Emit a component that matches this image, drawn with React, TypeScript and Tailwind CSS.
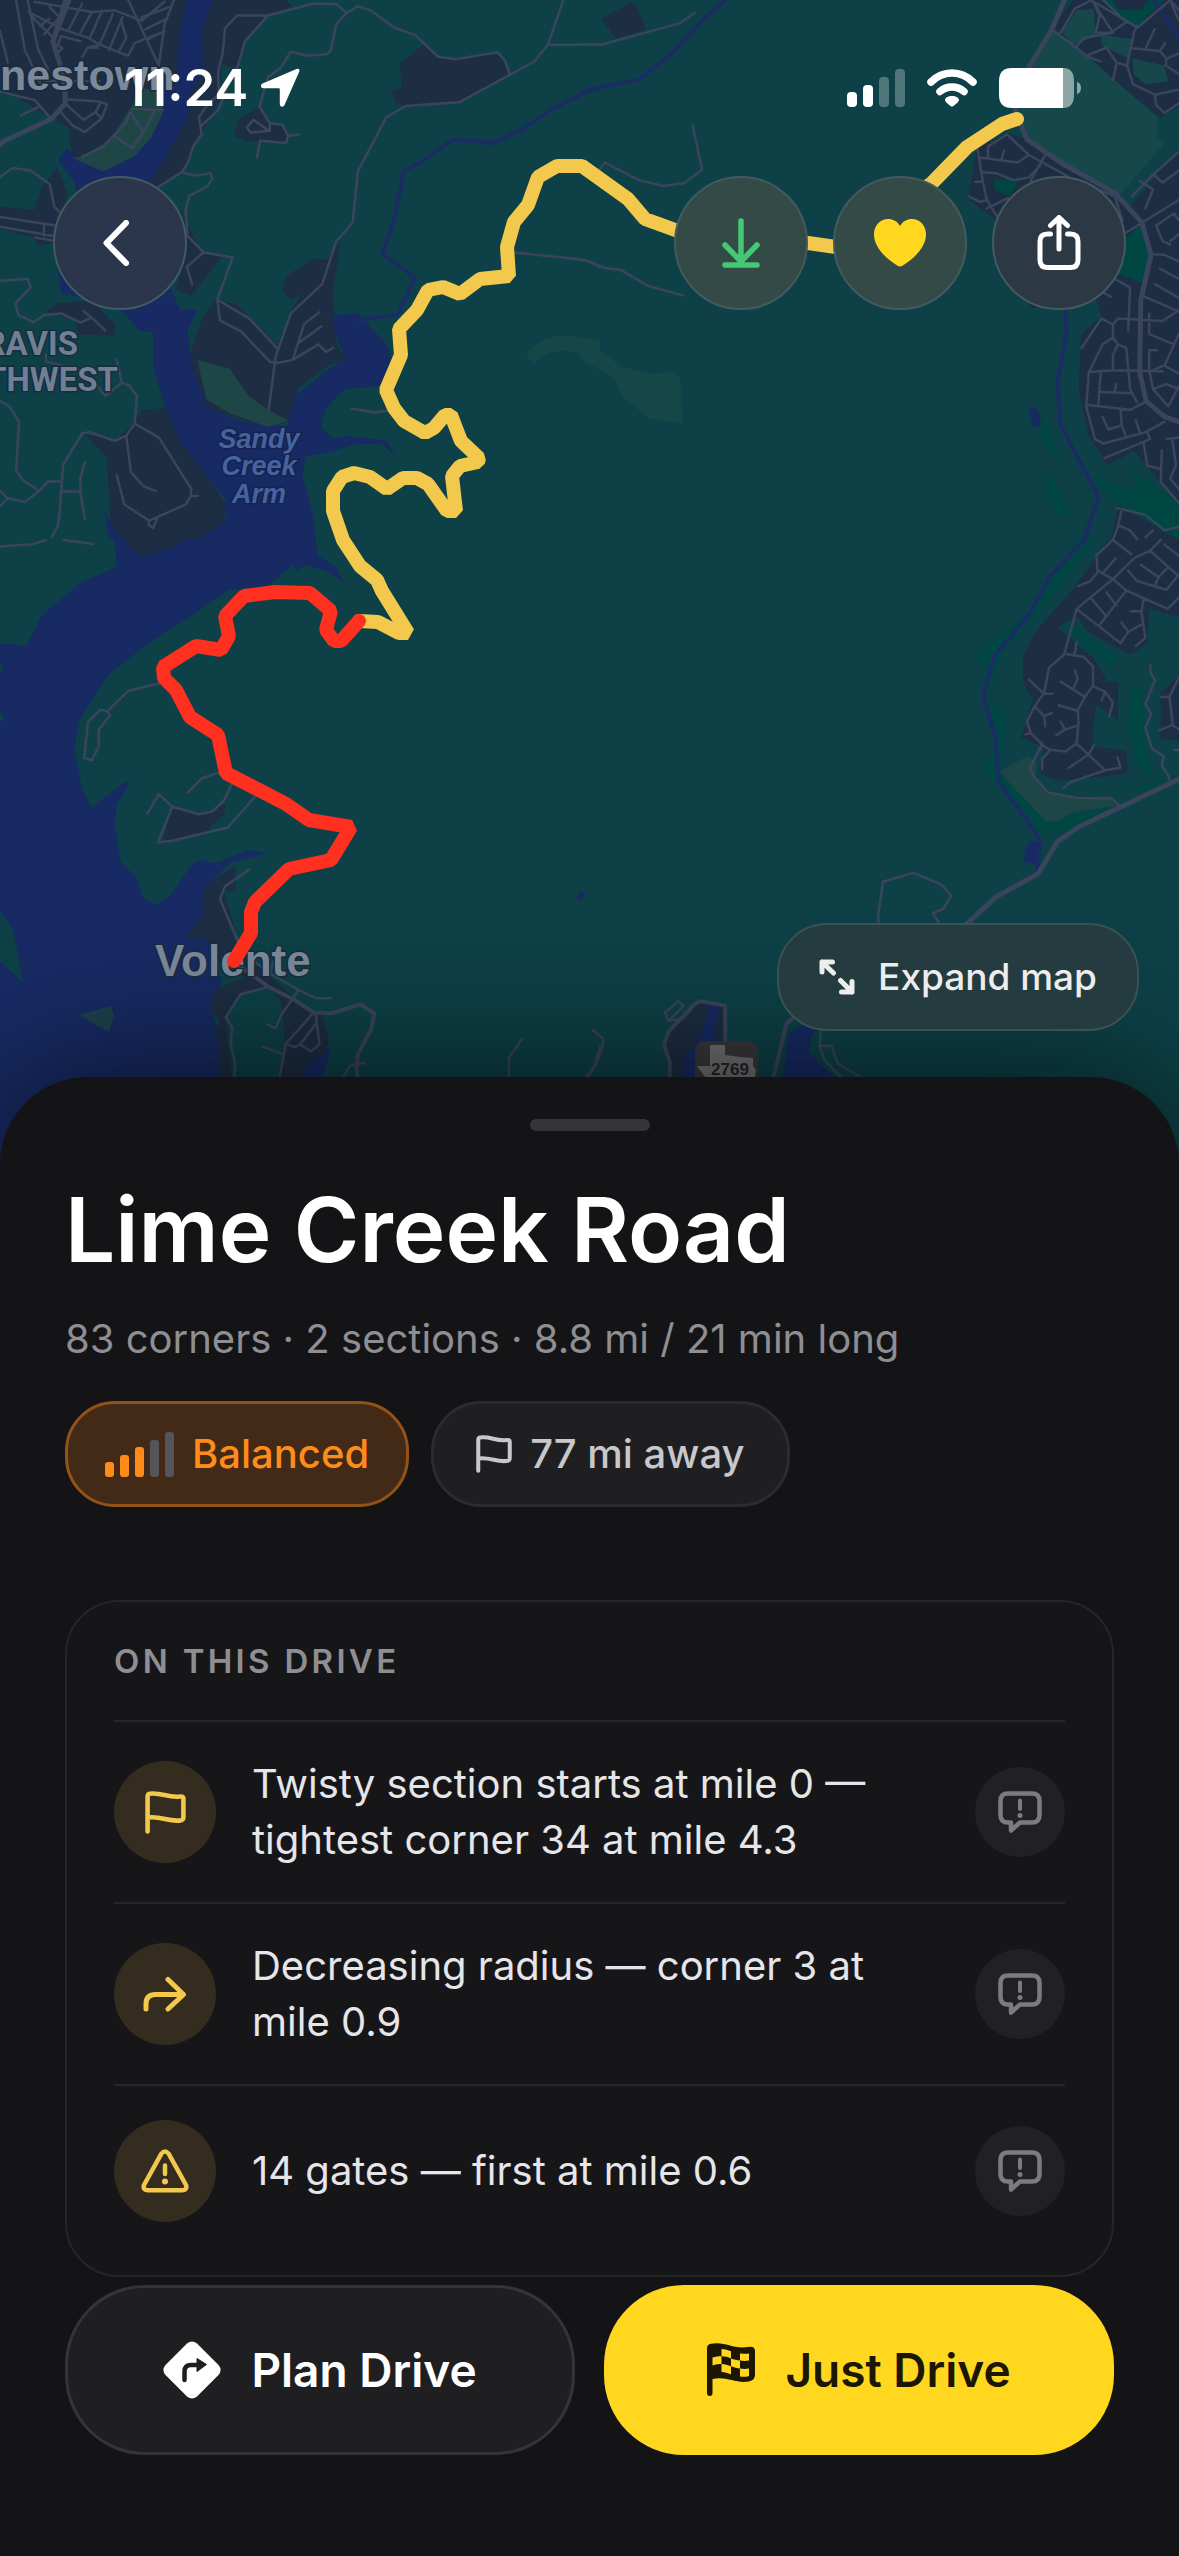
import type { ReactNode } from "react";

const road = {
  fill: "none",
  stroke: "#3a455c",
  strokeWidth: 2.5,
  strokeLinejoin: "round" as const,
  strokeLinecap: "round" as const,
};

function Line({ d, w = 2.5, c = "#3a455c" }: { d: string; w?: number; c?: string }) {
  return <path {...road} d={d} stroke={c} strokeWidth={w} vectorEffect="non-scaling-stroke" />;
}

const DARK = "#1d2d43";
const WATER = "#172a63";
const GOLF = "#1f4646";
const WOOD = "#004744";
const LAND = "#0d4147";

function TileNW() {
  return (
    <g transform="scale(.38265 .34439)">
      <path fill={DARK} d="M0 0H750L765 20L700 45L640 120L622 205L580 185L575 290L520 400L480 500L410 545L370 570H200L180 370L130 340L50 285L0 262Z" />
      <path fill={DARK} d="M0 600L90 610L110 540L150 485L175 560L160 700L100 715L90 690L0 665ZM150 880L240 875L300 940L300 975L205 972L195 930L120 905Z" />
      <path fill={DARK} d="M1045 185L1105 130L1145 165L1190 172L1298 152L1332 215L1200 297L1060 308L1035 300L1022 265L1050 255Z" />
      <path fill={DARK} d="M612 395L625 345L675 312L705 358L740 362L755 392L745 417L680 408L650 412Z" />
      <path fill={DARK} d="M737 845L750 800L820 750L855 755L890 700L870 850L880 1000L910 1048L860 1060L775 1130V1220L700 1240L520 1180L490 1050L530 920L568 868L620 885L725 1000L760 905L790 850L760 872Z" />
      <path fill={DARK} d="M470 610L530 735L580 745L500 860L460 840L480 760Z" />
      <path fill={DARK} d="M220 1260L300 1280L350 1230L370 1190L435 1185L470 1280L540 1380L595 1470L580 1530L540 1568H290L280 1330Z" />
      <path fill={WATER} d="M490 0H555L530 80L525 140L535 200L500 270L490 340L460 400L430 460L390 530L440 820L470 900L515 900L490 960L500 1060L540 1180L620 1220L750 1240L770 1150L860 1070L905 1045L870 950V915L935 910L1010 1000L1022 1040L1000 1120L900 1130L850 1190L838 1240L870 1275L900 1265L1010 1280L1032 1325L1000 1290L930 1290L870 1310L800 1325L790 1380L820 1500L825 1568H520L590 1510V1450L540 1380L470 1280L430 1180L400 1060V965L365 960L320 905L200 860L160 850L150 780L205 545L152 465L175 430L200 455L270 498L350 450L400 390L430 320L425 262L458 250L470 100ZM272 1480L300 1540L320 1568H285Z" />
      <path fill={GOLF} d="M370 255L425 265L425 330L395 400L350 455L270 498L188 458L215 455L290 405L340 315ZM515 1045L600 1070L650 1150L700 1190L755 1222L700 1240L600 1200L540 1160Z" />
      <path fill="#154748" d="M1375 1030C1400 980 1460 970 1500 975L1568 990V1060C1500 1000 1430 1010 1395 1058Z" />
      <Line c="#1a2c63" w={4} d="M1568 255L1540 262L1435 322L1370 372L1290 415L1185 405L1095 475L1055 495L1030 640L1000 738L1085 806L1038 915L915 932" />
      <Line w={5} d="M172 0L138 120L155 180L170 260V300L135 345L10 410L0 420M138 120L180 0" />
      <Line d="M42 0L65 145L105 240M72 0L100 145L125 200M0 90L20 180M75 35L165 85M90 5L240 35L300 30L370 60L430 5M115 100L155 50L130 20M128 55L105 75M80 45L135 105M215 10L180 85M240 35L210 95M265 35L235 110M295 40L260 130M320 50L285 145M335 0L415 190M160 105L150 130L163 140L148 155M160 105L210 120M150 80L230 110L262 130L335 162L352 125L420 95M262 130L230 138L215 165M318 65L330 110L310 150M370 50L445 20M455 0L430 70L415 190M380 85L435 55M385 115L430 90M230 138H255" />
      <Line d="M0 265L50 280L90 290L130 340M55 335L105 308M170 288L260 295L280 303L265 345L222 383L190 365L155 320M175 305L218 348L250 325L262 298M250 325L265 345M345 315L425 320M340 325L375 385L405 320M300 395L345 430L375 385M340 325L330 355L270 425L215 455M120 235H260" />
      <Line d="M700 45H620L588 82L582 155L570 210L572 275L545 300L520 340L527 390L505 425L492 470L475 500L410 545M700 45L640 120L622 190L600 240L570 320L527 365M700 45L820 10L880 12L905 38L878 72L865 145L855 157L805 162L760 150L735 195L700 225L678 310L705 358L738 362L753 395L748 415L680 408L672 455M705 358V380L655 385L645 370L662 348L703 380M753 395L780 390M905 38L935 18L968 30L1030 80L1085 102L1145 165L1190 172L1300 152L1320 175L1332 217L1395 180L1432 130L1472 0M1432 130H1568M1332 217L1200 297L1060 308L1010 340L935 498L922 645L878 702L842 825L760 910L722 1030L718 1055L702 1190" />
      <Line d="M475 500L512 510L550 503L555 518L542 542L495 568L485 610L490 685L532 733L608 748L568 870L575 930L630 962L705 1050L722 1055L765 1045L832 1000L852 1022L870 1010M532 733L488 775L502 825M568 870L652 925L725 1012M765 1045L795 940L835 907M778 998L840 947" />
      <Line d="M0 515L32 488L80 495L130 535L142 600L158 618M0 630L145 655M0 658L140 685M115 655V685M92 690L145 700M0 815L72 810L80 835L40 880L48 915L88 935L115 915L160 910L210 937L240 922L218 903M240 922L275 960M305 1045L318 1110L338 1120L358 1150L352 1230L415 1270L500 1420L498 1442L485 1465L390 1512L325 1465L305 1380M498 1440H517M390 1512L388 1525L400 1533L410 1508M352 1230L330 1265L300 1280L235 1255L215 1258L165 1350L155 1500L150 1530L135 1560M330 1265L342 1370L375 1412L407 1426M222 1342L210 1390V1430L222 1508M157 1427H210M0 1165L25 1180L50 1225L42 1365L60 1395L103 1425L125 1398H155M0 1425L20 1447L65 1458L103 1425M20 1447L0 1470M120 1030V1050L210 1075M240 1100L275 1150L320 1110" />
      <Line d="M920 1187L980 1198L1010 1193M1345 733L1530 755L1568 775" />
    </g>
  );
}

function TileNE() {
  return (
    <g transform="translate(580 0) scale(.38202 .34439)">
      <path fill={DARK} d="M55 55L135 5L150 20L172 85L95 112ZM1235 85L1290 0H1568V310L1520 342L1400 235L1290 140ZM1040 430L1120 385L1170 405L1380 560L1440 600L1568 430V1460L1520 1400L1450 1310L1380 1350L1330 1260L1305 1130L1312 970L1365 920L1350 870L1180 895L1090 640L1015 575ZM1390 1568L1410 1460L1490 1480L1568 1568Z" />
      <path fill="#16484b" d="M1240 90L1330 165L1510 340V400L1530 415L1480 480L1410 570L1170 405L1145 350L1180 200ZM1262 95L1300 30L1345 25L1350 105L1290 130ZM1365 100L1450 115L1435 170L1365 130ZM1445 170L1530 190L1540 235L1480 245L1450 215Z" />
      <path fill={WOOD} d="M1375 0H1530L1460 75L1430 70ZM1430 690L1480 640L1495 740L1470 820L1410 795ZM1210 1190L1260 1330L1210 1290ZM1340 1380L1450 1430L1445 1370L1568 1460V1568L1400 1460ZM1230 1370L1285 1500L1250 1500L1215 1420ZM1085 520L1150 520L1125 570L1085 550Z" />
      <path fill={DARK} d="M1395 0H1490L1470 28H1410Z" />
      <path fill="#154748" d="M0 980L40 1010L110 1065L180 1085L245 1080L262 1100L270 1232L180 1215L110 1150L90 1100L0 1040Z" />
      <path fill={WATER} d="M1175 1190Q1185 1175 1198 1190L1208 1230Q1190 1250 1180 1225Z" />
      <Line c="#1a2c63" w={4} d="M380 0L325 55L240 155L155 230L25 260L0 274M1270 895L1274 965L1250 1110L1258 1235L1358 1443L1320 1568M1505 5L1568 110" />
      <Line d="M0 130H55L260 68L300 38M295 365L320 493L272 532L218 540L155 523L65 472L45 500M0 755L18 757L65 778L105 783L178 830L270 858" />
      <Line w={5} d="M1268 0L1235 85L1170 205L1140 320L1170 405L1270 480L1400 560L1470 645L1495 740L1468 870L1465 1080L1482 1165L1530 1210L1568 1225" />
      <Line d="M1235 85L1330 165L1362 178M1258 95L1295 25L1340 0L1395 95M1345 5L1460 80L1545 0L1568 30M1395 90L1425 68M1350 95L1360 45L1350 20M1350 95L1395 95M1300 135L1320 110L1395 95M1330 160L1378 138L1405 182L1395 232M1405 182L1432 190L1450 95L1458 75M1445 140L1518 148L1532 125M1482 137L1504 85M1518 148L1535 170L1533 190L1568 215M1432 190L1448 245L1505 275L1568 260M1505 275L1508 305L1530 328L1568 300M1535 170L1568 155M1370 0L1430 65M1548 10L1568 60" />
      <Line d="M1040 430L1055 530L1065 580L1095 635M1048 458L1068 460L1145 472L1175 450L1118 390L1068 425V460M1104 460L1110 438M1175 450L1290 520L1400 570L1420 640M1217 452L1202 480L1180 525M1055 500L1090 503L1135 523L1175 515L1205 480M1055 528H1035M1018 570L1048 587L1065 580M1065 605L1120 575M1568 440L1502 505L1445 570M1502 508L1525 530L1568 495M1465 525L1500 550L1480 605M1430 675L1568 580M1508 655L1555 620L1568 640M1508 655L1525 700L1545 710M1545 700L1568 680M1497 738L1530 740L1568 760M1518 780L1568 810M1505 825L1568 865M1475 860L1568 905M1400 810L1440 835L1435 960M1370 850L1390 862" />
      <Line d="M1313 1010L1365 925L1395 942L1408 925L1525 932L1568 900M1395 942V980L1408 1000L1430 1010L1440 1130L1458 1168M1408 1000L1395 1030V1075M1395 980L1368 1000L1332 1080L1325 1180L1348 1275L1370 1288L1480 1255L1530 1225M1332 1080L1395 1075L1525 1078M1363 1080L1357 1172M1363 1138L1445 1142M1403 1115L1400 1138M1325 1175L1440 1190L1485 1165M1415 1190L1418 1235L1383 1247L1368 1210M1418 1235L1430 1268M1455 1220L1465 1255M1485 1255L1492 1275L1373 1330M1490 910V970L1555 1000L1530 1062L1568 1085M1555 1000L1568 970M1490 1017H1510M1490 1017V1075L1500 1130L1540 1180L1568 1120M1500 1130L1535 1115L1568 1130M1530 1060L1500 1075M1535 1275L1568 1270M1475 1285L1485 1352L1520 1362M1523 1308L1520 1400L1568 1460M1550 1275L1560 1350L1545 1390L1568 1420M1405 1475L1480 1495L1530 1540L1568 1530M1418 1480L1408 1530L1395 1568M1408 1525L1440 1540L1460 1568M1500 1540L1480 1560" />
    </g>
  );
}

function TileSW() {
  return (
    <g transform="translate(0 540) scale(.38265 .35714)">
      <path fill={WATER} d="M300 0H825L830 40L880 80L900 118L860 90L800 70L775 85L765 68L700 130L600 140L540 180L505 210L400 280L280 380L240 450L205 510L195 590L215 700L240 748L330 675L340 680L305 740L300 800L315 900L360 950L375 1005L410 1022L450 990L500 910L525 895L560 905L650 868L700 877L600 905L530 980L530 1050L485 1115L540 1120L580 1240L550 1300L575 1400V1650L0 1800V1180L60 1240L35 1090L0 1040V290L70 295L110 210L210 120L305 75Z" />
      <path fill={LAND} d="M0 340L10 360L0 370ZM0 480L12 500L0 512Z" />
      <path fill={WATER} d="M1505 1000L1520 982L1530 990L1515 1012Z" />
      <path fill={DARK} d="M330 0H480L455 20L380 45L345 30ZM450 745L520 768L590 740L585 770L550 800V815L425 845ZM615 910V985L585 980L620 1120L660 1180L800 1310L840 1320L860 1400L820 1568H720L745 1410L735 1290L700 1250L630 1270L590 1335L610 1568H575V1400L555 1380L575 1350L550 1310L560 1260L640 1225L560 1175L485 1115L530 1050V975Z" />
      <path fill={WATER} d="M865 1425L845 1490L820 1568H780L800 1470ZM485 1115L540 1120L560 1190L500 1150Z" />
      <path fill={GOLF} opacity=".8" d="M207 1330L290 1305L298 1330L285 1378L250 1358Z" />
      <Line d="M0 18L85 12L120 0M165 0L243 11M415 402L335 423L280 480L262 475L230 510L220 610L240 617L258 578V532L288 490L280 480M570 652L528 667L490 708M605 685L585 730L555 760L520 768L450 747L415 712L385 766M450 747L413 846L450 842L595 805L668 717M652 922L588 970L575 1005L620 1120L640 1150" />
      <Line w={4} d="M610 1180L700 1250L765 1285L820 1323L868 1325L942 1300L978 1325L970 1370L935 1440L932 1480L940 1568" />
      <Line d="M665 1180L705 1213L780 1260L825 1283H865M705 1213L715 1180M780 1260L735 1330L720 1368L700 1357M700 1252L628 1272L590 1337L607 1365L603 1410L615 1470L605 1568M820 1323L747 1410L770 1420L785 1412L812 1432L835 1412L825 1325M825 1355L785 1412M747 1410L720 1568M685 1418L735 1438M935 1465H955M932 1465L912 1475L895 1510M1364 1397L1330 1450V1568M1552 1373L1568 1390M1568 1420L1552 1475L1530 1505L1510 1568" />
    </g>
  );
}

function TileSE() {
  return (
    <g transform="translate(580 540) scale(.38202 .38265)">
      <path fill={WOOD} d="M1300 0H1350L1210 180L1110 290L1065 400L1115 460L1105 540L1100 600L1220 730L1290 720L1390 700L1270 765L1200 765L1060 600L1085 540L1060 330L1025 310L1180 180ZM1270 210L1410 310L1390 335L1310 270ZM1445 385H1470L1480 530L1500 620L1460 590L1435 480ZM1410 655L1530 625L1500 650Z" />
      <path fill={DARK} d="M1380 0H1568V200L1490 180L1485 270L1440 300L1330 240L1300 200L1250 230L1345 310L1380 370H1408V470L1350 430L1340 540L1430 550L1432 610L1260 630L1200 610L1215 545L1155 515L1185 420L1160 370V300L1200 230L1290 130L1340 60ZM1568 355L1520 400V520L1568 525Z" />
      <path fill={GOLF} d="M1100 605L1170 565L1195 580L1190 620L1230 660L1310 680L1385 675L1400 695L1290 710L1250 735H1220L1120 630Z" />
      <path fill={WATER} d="M1175 787H1202L1198 850L1160 840ZM0 915L12 928L0 942Z" />
      <path fill={DARK} d="M300 1210L380 1215V1420H235L220 1320L232 1285Z" />
      <path fill={WATER} d="M340 1213L362 1218L350 1310L300 1420H275L270 1360L320 1290ZM545 1290L590 1265H630L605 1300L600 1340L680 1420H530Z" />
      <Line c="#1a2c63" w={4} d="M1320 0L1230 95L1175 195L1085 303L1055 405L1087 515L1097 635L1165 725L1205 785L1197 860" />
      <Line d="M782 1010L780 985L793 893L872 870L945 900L972 930L950 965L923 975L950 1015M1410 693L1390 675H1305L1225 660L1190 620L1178 595L1210 530M1568 550L1555 548M1493 328V345L1505 367L1480 428L1495 455L1480 490L1497 545L1528 565L1523 590L1540 615L1542 625" />
      <Line d="M1395 0L1352 40L1355 85L1335 108L1305 120M1355 80L1395 102L1300 180L1267 300L1228 333L1215 400L1190 435L1170 475L1180 505L1210 535L1230 548L1270 553L1300 532L1305 480L1303 445L1322 410L1343 380V330L1318 305L1267 297M1395 0L1443 37M1395 102L1450 48L1492 28L1520 0M1370 85L1402 48M1395 102L1430 132L1538 180L1568 150M1430 132L1358 225M1300 180L1415 270L1435 240L1473 220M1435 240L1417 215M1475 155L1470 190L1480 255L1455 277M1470 186H1442M1340 155L1378 200M1378 137L1403 170M1435 80L1458 107L1535 130L1568 90M1468 65L1515 97L1505 118M1515 97L1540 70M1492 28L1568 95M1530 12L1568 42M1300 268L1295 297M1175 365L1215 402H1237M1190 435L1215 460L1235 452M1215 460L1218 487M1165 508L1180 505M1258 370L1322 410M1295 340L1303 362L1290 390M1253 432L1303 447M1247 510L1270 495L1303 485M1258 475L1270 495M1343 382L1375 397L1395 425L1385 462M1375 397L1365 420M1300 532L1375 602L1415 595L1407 568M1375 602L1283 633L1267 647M1280 595L1332 560L1345 537M1210 535L1178 595M1230 550L1210 572V598M1568 358L1543 410L1552 485L1568 495M1520 410H1543M1517 497L1552 483" />
      <Line w={5} d="M1568 625L1305 750L1250 788L1200 872L1090 932L1010 1005" />
      <Line w={4} d="M235 1420V1365L220 1320L232 1285L300 1213L315 1205L380 1217V1320M565 1243L540 1265L510 1390L500 1420" />
      <Line d="M222 1235L258 1205L270 1218L232 1257L222 1235M232 1257L270 1250L300 1213M35 1282L60 1303V1322L40 1375L10 1420M632 1275L627 1322L640 1360L700 1420M627 1322H658L675 1368L745 1410" />
    </g>
  );
}

function RouteMap() {
  return (
    <svg
      className="absolute inset-x-0 top-0 h-[1240px] w-full"
      viewBox="0 0 1179 1240"
      preserveAspectRatio="xMidYMin slice"
      role="img"
      aria-label="Map of Lime Creek Road near Volente"
      fontFamily='"Liberation Sans", Arial, sans-serif'
      fontWeight="700"
    >
      <rect width="1179" height="1240" fill={LAND} />
      <TileNW />
      <TileNE />
      <TileSW />
      <TileSE />
      <g fill="#7b899b" stroke="#1a2b3d" strokeWidth="3" paintOrder="stroke">
        <text x="0" y="90" fontSize="43">nestown</text>
        <g textAnchor="end" fontSize="33" fontFamily="Roboto, sans-serif" fill="#708094">
          <text x="78" y="355">RAVIS</text>
          <text x="118" y="391">THWEST</text>
        </g>
        <text x="155" y="976" fontSize="44">Volente</text>
      </g>
      <g fill="#46639f" stroke="#14234f" strokeWidth="3" paintOrder="stroke" fontSize="27" fontStyle="italic" textAnchor="middle">
        <text x="259" y="448">Sandy</text>
        <text x="259" y="475">Creek</text>
        <text x="259" y="503">Arm</text>
      </g>
      <g fill="none" strokeWidth="14" strokeLinecap="round" strokeLinejoin="bevel">
        <path
          stroke="#f2c94c"
          d="M359 621L378 622L399 633L408 633L382 591L377 580L360 566L343 540L333 511L333 491L342 477L354 473L370 477L387 489L403 478L417 478L428 484L447 511L456 511L452 476L460 466L478 462L479 458L461 441L451 415L445 415L434 428L425 433L404 421L394 408L386 390L401 355L399 329L417 310L428 290L443 287L460 294L480 279L509 276L507 247L514 222L528 205L538 177L557 166H582L628 199L645 219L678 231"
        />
        <path stroke="#f2c94c" d="M678 231L808 243L836 247L932 183L967 147L1002 124L1017 119" />
        <path
          stroke="#ff301f"
          d="M359 621L341 641L334 641L326 630L331 611L310 593L275 592L244 596L225 616L229 636L221 650L196 646L163 667L164 678L176 690L190 717L218 735L226 773L286 804L309 820L351 827L331 860L289 869L255 902L251 912V933L234 961"
        />
      </g>
      <rect x="695" y="1041" width="63" height="60" rx="10" fill="#39393b" />
      <path fill="#727274" d="M710 1045H725V1055L740 1057L753 1058V1066L756 1070L754 1080L745 1086L735 1098L726 1090L718 1082L710 1084L697 1066H710Z" />
      <text x="730" y="1075" fontSize="17" fill="#242426" textAnchor="middle">2769</text>
    </svg>
  );
}

function StatusBar() {
  return (
    <div className="flex h-[176px] items-start justify-between pt-[58px] pr-[98px] pl-[124px] text-white">
      <div className="flex items-center gap-3">
        <span className="text-[51px] leading-[60px] font-semibold">11:24</span>
        <svg width="40" height="40" viewBox="0 0 40 40" fill="currentColor" aria-label="Location in use">
          <path d="M36.500 1C38.500 0 40 1.500 39.300 3.600L24.500 37C23.300 39.600 19.800 39 19.800 36V21.500C19.800 20.500 19.500 20.200 18.500 20.200H3.500C.600 20.200 0 16.700 2.600 15.500Z" />
        </svg>
      </div>
      <div className="flex h-[60px] items-center gap-[22px]">
        <svg width="58" height="38" viewBox="0 0 58 38" fill="currentColor" aria-label="Cellular signal">
          <rect y="23" width="10" height="15" rx="4" />
          <rect x="16" y="16" width="10" height="22" rx="4" />
          <rect x="32" y="8" width="10" height="30" rx="4" opacity=".28" />
          <rect x="48" width="10" height="38" rx="4" opacity=".28" />
        </svg>
        <svg width="50" height="38" viewBox="0 0 50 38" fill="none" stroke="currentColor" strokeWidth="7.500" strokeLinecap="round" aria-label="Wi-Fi">
          <path d="M4 13C16 1 34 1 46 13M13 22.500C20 16.500 30 16.500 37 22.500" />
          <path fill="currentColor" stroke="none" d="M25 27C29 27 32 29 32 31C32 33 28 35.500 26.500 37Q25 38.200 23.500 37C22 35.500 18 33 18 31C18 29 21 27 25 27Z" />
        </svg>
        <svg width="82" height="40" viewBox="0 0 82 40" fill="currentColor" aria-label="Battery">
          <path d="M13 0H64V40H13Q0 40 0 27V13Q0 0 13 0Z" />
          <path opacity=".5" d="M64 0Q75 0 75 13V27Q75 40 64 40ZM78 14Q82 15 82 20T78 26Z" />
        </svg>
      </div>
    </div>
  );
}

function RoundButton({ label, tone, children }: { label: string; tone: "blue" | "olive" | "slate"; children: ReactNode }) {
  const tones = { blue: "bg-[#2b364c]", olive: "bg-[#334a46]", slate: "bg-[#2c3945]" };
  return (
    <button
      aria-label={label}
      className={`flex size-[134px] items-center justify-center rounded-full border-2 border-[#435a60] text-white ${tones[tone]}`}
    >
      {children}
    </button>
  );
}

const stroke = { fill: "none", stroke: "currentColor", strokeLinecap: "round" as const, strokeLinejoin: "round" as const };

function FlagIcon({ className }: { className: string }) {
  return (
    <svg className={className} viewBox="0 0 40 42" {...stroke} strokeWidth="4.500" aria-hidden="true">
      <path d="M2.500 39.500V5.500Q2.500 3 4.500 2.600C16 1 22 7 34.500 5.400Q37.500 5 37.500 7.500V25.500Q37.500 28 35.500 28.500C24 31 16 24 2.500 26" />
    </svg>
  );
}

function TurnIcon({ className }: { className: string }) {
  return (
    <svg className={className} viewBox="0 0 44 36" {...stroke} strokeWidth="5" aria-hidden="true">
      <path d="M3 33V28Q3 18.500 12.500 18.500H40M25 3.500L40.500 18.500L25 33" />
    </svg>
  );
}

function WarningIcon({ className }: { className: string }) {
  return (
    <svg className={className} viewBox="0 0 48 44" {...stroke} strokeWidth="4.500" aria-hidden="true">
      <path d="M20.400 4.600Q24 .400 27.600 4.600L45 36Q46.500 41 41.500 41.300H6.500Q1.500 41 3 36ZM24 16.500V25" />
      <circle cx="24" cy="32.500" r="3" fill="currentColor" stroke="none" />
    </svg>
  );
}

function ReportIcon() {
  return (
    <svg width="44" height="42" viewBox="0 0 44 42" {...stroke} strokeWidth="4.500" aria-hidden="true">
      <path d="M10 2.500H34Q41.500 2.500 41.500 10V24Q41.500 31.500 34 31.500H22L13 39.500V31.500H10Q2.500 31.500 2.500 24V10Q2.500 2.500 10 2.500Z" />
      <path d="M22 9.500V18" strokeWidth="4" />
      <circle cx="22" cy="24.500" r="2.500" fill="currentColor" stroke="none" />
    </svg>
  );
}

const notes = [
  { Icon: FlagIcon, size: "h-[43px] w-[41px]", text: "Twisty section starts at mile 0 — tightest corner 34 at mile 4.3" },
  { Icon: TurnIcon, size: "h-[36px] w-[44px]", text: "Decreasing radius — corner 3 at mile 0.9" },
  { Icon: WarningIcon, size: "h-[44px] w-[48px]", text: "14 gates — first at mile 0.6" },
];

export default function App() {
  return (
    <div className="flex min-h-screen flex-col overflow-hidden bg-[#141416] font-['Inter',sans-serif]">
      <header className="relative flex h-[1077px] flex-col">
        <RouteMap />
        <div className="relative flex flex-1 flex-col">
          <StatusBar />
          <nav className="flex items-center justify-between px-[53px]">
            <RoundButton label="Back" tone="blue">
              <svg className="mr-2" width="26" height="46" viewBox="0 0 26 46" {...stroke} strokeWidth="6" aria-hidden="true">
                <path d="M23 3L3.500 23L23 43" />
              </svg>
            </RoundButton>
            <div className="flex gap-[25px]">
              <RoundButton label="Download" tone="olive">
                <svg className="text-[#45c873]" width="38" height="50" viewBox="0 0 38 50" {...stroke} strokeWidth="5.500" aria-hidden="true">
                  <path d="M19 3V43M3 27L19 43.500L35 27M3 47H35" />
                </svg>
              </RoundButton>
              <RoundButton label="Favorite" tone="olive">
                <svg className="text-[#ffd71f]" width="52" height="48" viewBox="0 0 52 48" fill="currentColor" aria-hidden="true">
                  <path d="M26 7C29 2 33 0 38 0C46 0 52 6.500 52 15.500C52 29 39 40 28.500 46.800Q26 48.400 23.500 46.800C13 40 0 29 0 15.500C0 6.500 6 0 14 0C19 0 23 2 26 7Z" />
                </svg>
              </RoundButton>
              <RoundButton label="Share" tone="slate">
                <svg width="44" height="56" viewBox="0 0 44 56" {...stroke} strokeWidth="5" aria-hidden="true">
                  <path d="M13.500 19H10.500Q3 19 3 26.500V45Q3 52.500 10.500 52.500H33.500Q41 52.500 41 45V26.500Q41 19 33.500 19H30.500M22 34V4M13.500 10.500L22 2.500L30.500 10.500" />
                </svg>
              </RoundButton>
            </div>
          </nav>
        </div>
        <button className="absolute right-[40px] bottom-[46px] z-20 flex h-[108px] items-center gap-[23px] rounded-[50px] border-2 border-[#3b5154] bg-[#243c40] px-[40px] text-[37px] font-medium text-[#ededed]">
          <svg width="36" height="36" viewBox="0 0 36 36" {...stroke} strokeWidth="5" aria-hidden="true">
            <path d="M14.500 14L3 3M3 13V3H13.500M21.500 21.500L33 33M33 22.500V33H22.500" />
          </svg>
          Expand map
        </button>
      </header>

      <main className="relative z-10 flex flex-1 flex-col rounded-t-[88px] bg-[#141416] px-[65px] shadow-[0_0_140px_rgba(0,0,0,0.65)]">
        <div className="mx-auto mt-[42px] h-[12px] w-[120px] rounded-full bg-[#343439]" />
        <h1 className="mt-[45px] text-[89px] leading-[108px] font-semibold text-white">Lime Creek Road</h1>
        <p className="mt-[27px] text-[40px] leading-[56px] text-[#8e8e93]">83 corners · 2 sections · 8.8 mi / 21 min long</p>
        <div className="mt-[34px] flex gap-[22px] text-[40px] font-medium">
          <div className="flex h-[106px] items-center gap-[18px] rounded-[50px] border-[3px] border-[#925319] bg-[#422a17] px-[37px] text-[#ff8c1a]">
            <div className="flex items-end gap-[6px]" aria-hidden="true">
              <span className="h-[15px] w-[9px] rounded-[3px] bg-[#ff8c1a]" />
              <span className="h-[22px] w-[9px] rounded-[3px] bg-[#ff8c1a]" />
              <span className="h-[30px] w-[9px] rounded-[3px] bg-[#ff8c1a]" />
              <span className="h-[37px] w-[9px] rounded-[3px] bg-[#555458]" />
              <span className="h-[45px] w-[9px] rounded-[3px] bg-[#555458]" />
            </div>
            Balanced
          </div>
          <div className="flex h-[106px] items-center gap-[18px] rounded-[50px] border-[3px] border-[#2c2c2f] bg-[#1f1f21] px-[42px] text-[#c7c7cc]">
            <FlagIcon className="h-[38px] w-[36px]" />
            77 mi away
          </div>
        </div>

        <section className="mt-[93px] rounded-[54px] border-2 border-[#262628] bg-[#161618] px-[47px] pb-[19px]">
          <h2 className="pt-[35px] pb-[35px] text-[33px] leading-[48px] font-semibold tracking-widest text-[#8e8e93]">ON THIS DRIVE</h2>
          <ul>
            {notes.map(({ Icon, size, text }) => (
              <li key={text} className="flex items-center border-t-2 border-[#262628] py-[34px]">
                <span className="flex size-[102px] shrink-0 items-center justify-center rounded-full bg-[#332c1f] text-[#f2c94c]">
                  <Icon className={size} />
                </span>
                <p className="ml-[36px] flex-1 pr-[50px] text-[40px] leading-[56px] text-[#e5e5ea]">{text}</p>
                <button
                  aria-label={`Report: ${text}`}
                  className="flex size-[90px] shrink-0 items-center justify-center rounded-full bg-[#212123] text-[#7c7b82]"
                >
                  <ReportIcon />
                </button>
              </li>
            ))}
          </ul>
        </section>

        <div className="mt-[8px] grid grid-cols-2 gap-[29px] pb-[100px] text-[46px] font-semibold">
          <button className="flex h-[170px] items-center justify-center gap-[30px] rounded-[80px] border-[3px] border-[#343439] bg-[#1f1f21] text-white">
            <svg width="58" height="58" viewBox="0 0 58 58" aria-hidden="true">
              <path fill="currentColor" d="M24 2.500Q29 -1.700 34 2.500L55.500 24Q59.700 29 55.500 34L34 55.500Q29 59.700 24 55.500L2.500 34Q-1.700 29 2.500 24Z" />
              <path d="M21.500 39V30.500Q21.500 24 28 24H35" fill="none" stroke="#1f1f21" strokeWidth="4.500" strokeLinecap="round" />
              <path d="M34 17.500L43.500 23.500L34 30.500Z" fill="#1f1f21" stroke="#1f1f21" strokeLinejoin="round" />
            </svg>
            Plan Drive
          </button>
          <button className="flex h-[170px] items-center justify-center gap-[30px] rounded-[80px] bg-[#ffd71f] text-[#1c1603]">
            <svg width="48" height="54" viewBox="0 0 48 54" fill="currentColor" aria-hidden="true">
              <path d="M0 5Q0 1.500 4 .800C18 -2 26 6.500 41 4Q48 3 48 8V32Q48 37 42 38.500C29 41 20 33 5.500 36V50Q5.500 53 2.750 53T0 50Z" />
              <path
                fill="#ffd71f"
                d="M14.500 6C18 6 21 7 24 8.300V15.500C21 14 18 13.300 14.500 13.200ZM33 10.300C36 11 39 11 42 10.500V17.500C39 18 36 18 33 17.500ZM5.500 14.500C8.500 13.500 11.500 13.200 14.500 13.200V21C11.500 21 8.500 21.300 5.500 22.500ZM24 15.500C27 16.800 30 17.200 33 17.500V25.500C30 25 27 24.500 24 23.200ZM14.500 21C18 21.300 21 22 24 23.200V31.500C21 30 18 29.300 14.500 29ZM33 25.500C36 26 39 26 42 25.500V33C39 34 36 34 33 33.500Z"
              />
            </svg>
            Just Drive
          </button>
        </div>
      </main>
    </div>
  );
}
